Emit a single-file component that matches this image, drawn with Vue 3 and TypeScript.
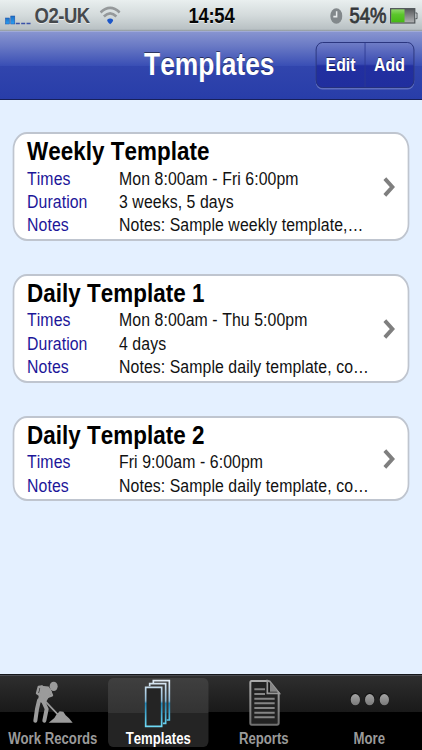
<script setup lang="ts">
interface Row {
  label: string
  value: string
}
interface Template {
  name: string
  rows: Row[]
}

const templates: Template[] = [
  {
    name: 'Weekly Template',
    rows: [
      { label: 'Times', value: 'Mon 8:00am - Fri 6:00pm' },
      { label: 'Duration', value: '3 weeks, 5 days' },
      { label: 'Notes', value: 'Notes: Sample weekly template,…' },
    ],
  },
  {
    name: 'Daily Template 1',
    rows: [
      { label: 'Times', value: 'Mon 8:00am - Thu 5:00pm' },
      { label: 'Duration', value: '4 days' },
      { label: 'Notes', value: 'Notes: Sample daily template, co…' },
    ],
  },
  {
    name: 'Daily Template 2',
    rows: [
      { label: 'Times', value: 'Fri 9:00am - 6:00pm' },
      { label: 'Notes', value: 'Notes: Sample daily template, co…' },
    ],
  },
]
</script>

<template>
  <div class="viewport">
    <div class="screen">
      <header class="status">
        <div class="status-left">
          <svg class="signal" viewBox="0 0 78 30" preserveAspectRatio="none">
            <defs>
              <linearGradient id="sig" x1="0" y1="0" x2="0" y2="1">
                <stop offset="0" stop-color="#1d6fc4" />
                <stop offset="1" stop-color="#2aa0f4" />
              </linearGradient>
            </defs>
            <rect x="1" y="9" width="12" height="18" fill="url(#sig)" stroke="#1a4fa8" stroke-width="1.5" />
            <rect x="17" y="3" width="12" height="24" fill="url(#sig)" stroke="#1a4fa8" stroke-width="1.5" />
            <path d="M32 25.5h12M48 25.5h12M64 25.5h12" stroke="#3a52a8" stroke-width="4" />
          </svg>
          <span class="carrier">O2-UK</span>
          <svg class="wifi" viewBox="0 0 64 58" preserveAspectRatio="none">
            <g fill="none" stroke="#95999b" stroke-width="8">
              <path d="M3 20Q32-8 61 20" />
              <path d="M13 32Q32 13 51 32" />
            </g>
            <path d="M23 42Q32 34 41 42Q42 47 32 56Q22 47 23 42Z" fill="#1c56c8" />
          </svg>
        </div>
        <span class="clock">14:54</span>
        <div class="status-right">
          <svg class="alarm" viewBox="0 0 42 50" preserveAspectRatio="none">
            <ellipse cx="21" cy="25" rx="20" ry="24" fill="#82888b" />
            <path d="M22 10V27H11" fill="none" stroke="#e8ebec" stroke-width="5" />
          </svg>
          <span class="percent">54%</span>
          <svg class="battery" viewBox="0 0 84 48" preserveAspectRatio="none">
            <defs>
              <linearGradient id="bg" x1="0" y1="0" x2="0" y2="1">
                <stop offset="0" stop-color="#8fd96a" />
                <stop offset=".4" stop-color="#5cc62c" />
                <stop offset="1" stop-color="#45b914" />
              </linearGradient>
              <linearGradient id="be" x1="0" y1="0" x2="0" y2="1">
                <stop offset="0" stop-color="#55585a" />
                <stop offset="1" stop-color="#b3b5b6" />
              </linearGradient>
            </defs>
            <rect x="2" y="2" width="73" height="43" fill="url(#be)" stroke="#4d5356" stroke-width="3.5" />
            <rect x="4" y="4" width="40" height="39" fill="url(#bg)" />
            <path d="M77 15h5v17h-5" fill="#c5cacc" stroke="#4d5356" stroke-width="3" />
          </svg>
        </div>
      </header>

      <nav class="navbar">
        <h1>Templates</h1>
        <div class="segments">
          <button type="button">Edit</button>
          <button type="button">Add</button>
        </div>
      </nav>

      <main class="list">
        <section v-for="t in templates" :key="t.name" class="card">
          <div class="info">
            <h2>{{ t.name }}</h2>
            <dl>
              <div v-for="r in t.rows" :key="r.label" class="row">
                <dt>{{ r.label }}</dt>
                <dd>{{ r.value }}</dd>
              </div>
            </dl>
          </div>
          <svg class="chevron" viewBox="0 0 36 60" preserveAspectRatio="none">
            <path d="M5 5L28 30L5 55" fill="none" stroke="#7f7f7f" stroke-width="12" />
          </svg>
        </section>
      </main>

      <footer class="tabs">
        <div class="tab">
          <svg viewBox="0 40 316.5 150" preserveAspectRatio="none">
            <g fill="#9b9b9b" stroke="#9b9b9b" stroke-linejoin="round" stroke-linecap="round">
              <ellipse cx="161" cy="77" rx="12" ry="14" stroke="none" />
              <path d="M124 78L145 80L153 94L134 126L117 121L119 100Z" stroke-width="5" />
              <path d="M126 77L116 79L111 98L119 103" fill="none" stroke-width="7" />
              <path d="M149 88L156 104L135 112" fill="none" stroke-width="7" />
              <path d="M117 119L111 145L106 180" fill="none" stroke-width="12" />
              <path d="M129 121L140 145L133 180" fill="none" stroke-width="12" />
              <path d="M134 120L174 162" fill="none" stroke-width="5" />
              <path d="M146 186L163 172L169 162L179 152L190 153L197 164L207 173L218 186Z" stroke="none" />
            </g>
          </svg>
          <span>Work Records</span>
        </div>
        <div class="tab active">
          <svg viewBox="0 40 316.5 150" preserveAspectRatio="none">
            <defs>
              <linearGradient id="tg" gradientUnits="userSpaceOnUse" x1="0" y1="58" x2="0" y2="198">
                <stop offset="0" stop-color="#e4edf5" />
                <stop offset=".45" stop-color="#8bb9d6" />
                <stop offset=".5" stop-color="#2388b8" />
                <stop offset="1" stop-color="#6fd9f5" />
              </linearGradient>
            </defs>
            <g transform="translate(1.5 0)" fill="none" stroke="url(#tg)" stroke-width="5">
              <path d="M142 68V60H190V178H182" />
              <path d="M131 77V69H179V188H171" />
              <path d="M119 80H167V197H119Z" fill="#242424" />
            </g>
          </svg>
          <span>Templates</span>
        </div>
        <div class="tab">
          <svg viewBox="0 40 316.5 150" preserveAspectRatio="none">
            <defs>
              <linearGradient id="rg" x1="0" y1="0" x2="0" y2="1">
                <stop offset="0" stop-color="#aaa" />
                <stop offset="1" stop-color="#707070" />
              </linearGradient>
            </defs>
            <g transform="translate(3 0)">
              <path d="M119 61H166L200 97V187Q200 192 195 192H119Q115 192 115 187V66Q115 61 119 61Z" fill="#222" stroke="url(#rg)" stroke-width="6" />
              <path d="M166 60V98H202L173 62Z" fill="#1b1b1b" stroke="#999" stroke-width="5" />
              <path d="M174 65L198 93H174Z" fill="#858585" />
              <path d="M127 86H159M127 100H159M127 114H188M127 128H188M127 142H188M127 156H188M127 170H188" stroke="#858585" stroke-width="6" />
            </g>
          </svg>
          <span>Reports</span>
        </div>
        <div class="tab">
          <svg viewBox="0 40 316.5 150" preserveAspectRatio="none">
            <defs>
              <linearGradient id="mg" x1="0" y1="0" x2="0" y2="1">
                <stop offset="0" stop-color="#a4a4a4" />
                <stop offset="1" stop-color="#797979" />
              </linearGradient>
            </defs>
            <g transform="translate(4.5 0)" fill="#111">
              <ellipse cx="111" cy="115" rx="15" ry="19" />
              <ellipse cx="155" cy="115" rx="15" ry="19" />
              <ellipse cx="198" cy="115" rx="15" ry="19" />
            </g>
            <g transform="translate(4.5 0)" fill="url(#mg)">
              <ellipse cx="112" cy="117" rx="14" ry="17" />
              <ellipse cx="155" cy="117" rx="14" ry="17" />
              <ellipse cx="199" cy="117" rx="14" ry="17" />
            </g>
          </svg>
          <span>More</span>
        </div>
      </footer>
    </div>
  </div>
</template>

<style>
body {
  margin: 0;
  background: #e4f0ff;
}
</style>

<style scoped>
.viewport {
  width: 422px;
  height: 750px;
  overflow: hidden;
}
/* The 500px wide layout is condensed to the 422px viewport. */
.screen {
  width: 500px;
  height: 750px;
  display: flex;
  flex-direction: column;
  transform: scaleX(0.844);
  transform-origin: 0 0;
  background: #e4f0ff;
  font-family: "Liberation Sans", Arial, Helvetica, sans-serif;
  font-kerning: none;
}
.status {
  height: 31px;
  box-sizing: border-box;
  display: grid;
  grid-template-columns: 1fr auto 1fr;
  align-items: center;
  padding: 0 5px 0 6px;
  background: linear-gradient(#e9efef, #d3dadb 50%, #b9c1c4 94%, #8e979e);
  font-size: 21.9px;
  font-weight: bold;
  color: #45494d;
  text-shadow: 0 1px 0 rgba(255, 255, 255, 0.6);
}
.status-left,
.status-right {
  display: flex;
  align-items: center;
}
.status-right {
  justify-content: flex-end;
}
.signal {
  width: 31px;
  height: 10px;
  margin-top: 8px;
}
.carrier {
  margin-left: 4px;
  letter-spacing: -0.6px;
}
.wifi {
  width: 25px;
  height: 19px;
  margin-left: 12px;
}
.clock {
  color: #060606;
  letter-spacing: -0.3px;
}
.alarm {
  width: 15px;
  height: 16px;
  margin-right: 8px;
}
.percent {
  font-weight: normal;
  color: #33373a;
  -webkit-text-stroke: 0.8px #33373a;
}
.battery {
  width: 33px;
  height: 16px;
  margin-left: 4px;
}
.navbar {
  position: relative;
  height: 69px;
  box-sizing: border-box;
  display: flex;
  justify-content: center;
  border-top: 1px solid #a0aad8;
  border-bottom: 1.5px solid #17205a;
  background: linear-gradient(#8794d0, #6878c4 22%, #3a4fb5 50%, #3145ad 51%, #283da9);
}
h1 {
  margin: 15px 0 0;
  padding-right: 4px;
  font-size: 31.25px;
  line-height: 36px;
  color: #fff;
  text-shadow: 0 -1.5px 0 rgba(0, 0, 0, 0.5);
}
.segments {
  position: absolute;
  top: 10px;
  right: 9px;
  width: 117px;
  height: 46px;
  box-sizing: border-box;
  display: flex;
  border: 1.5px solid #253078;
  border-radius: 8px;
  background: linear-gradient(#6e7cc6, #3a4bb2 48%, #222fa0 52%, #202e9e);
  box-shadow: 0 1.5px 0 rgba(255, 255, 255, 0.25);
}
.segments button {
  flex: 1;
  padding: 0;
  border: 0;
  background: none;
  font: bold 18.75px "Liberation Sans", Arial, sans-serif;
  color: #fff;
  text-shadow: 0 -1px 0 rgba(0, 0, 0, 0.5);
}
.segments button + button {
  border-left: 1.5px solid #2c3a91;
}
.list {
  flex: 1;
  display: flex;
  flex-direction: column;
  gap: 33.1px;
  padding: 32px 15px 0;
}
.card {
  display: flex;
  align-items: center;
  padding: 2.8px 15px 2px 15px;
  border: 2px solid #bfc5cf;
  border-radius: 17px;
  background: #fff;
}
.info {
  flex: 1;
}
h2 {
  margin: 0;
  font-size: 26.56px;
  line-height: 29.7px;
  letter-spacing: 0.05px;
  color: #000;
}
dl {
  margin: 0;
}
.row {
  display: grid;
  grid-template-columns: 109px auto;
  font-size: 18.75px;
  line-height: 23.44px;
  letter-spacing: 0.1px;
  white-space: nowrap;
}
dt {
  color: #1c1699;
}
dd {
  margin: 0;
  color: #111;
}
.chevron {
  width: 14px;
  height: 20px;
}
.tabs {
  height: 76.5px;
  box-sizing: border-box;
  display: grid;
  grid-template-columns: repeat(4, 1fr);
  background: linear-gradient(#15171b 0, #15171b 1px, #4a4b50 1px, #4a4b50 2px, #2e2e2e 2px, #191919 38.5px, #000 38.5px);
}
.tab {
  position: relative;
  display: flex;
  flex-direction: column;
  align-items: center;
  font-size: 15.6px;
  font-weight: bold;
  line-height: 17.4px;
  color: #9a9a9a;
}
.tab svg {
  width: 125px;
  height: 50px;
  overflow: visible;
}
.tab span {
  padding-top: 6px;
}
.tab svg,
.tab span {
  position: relative;
}
.active {
  color: #fff;
}
.active::before {
  content: "";
  position: absolute;
  inset: 4.5px 3px 3.5px;
  border-radius: 6px;
  background: linear-gradient(#3f3f3f, #333 50%, #242424 50%);
}
</style>
